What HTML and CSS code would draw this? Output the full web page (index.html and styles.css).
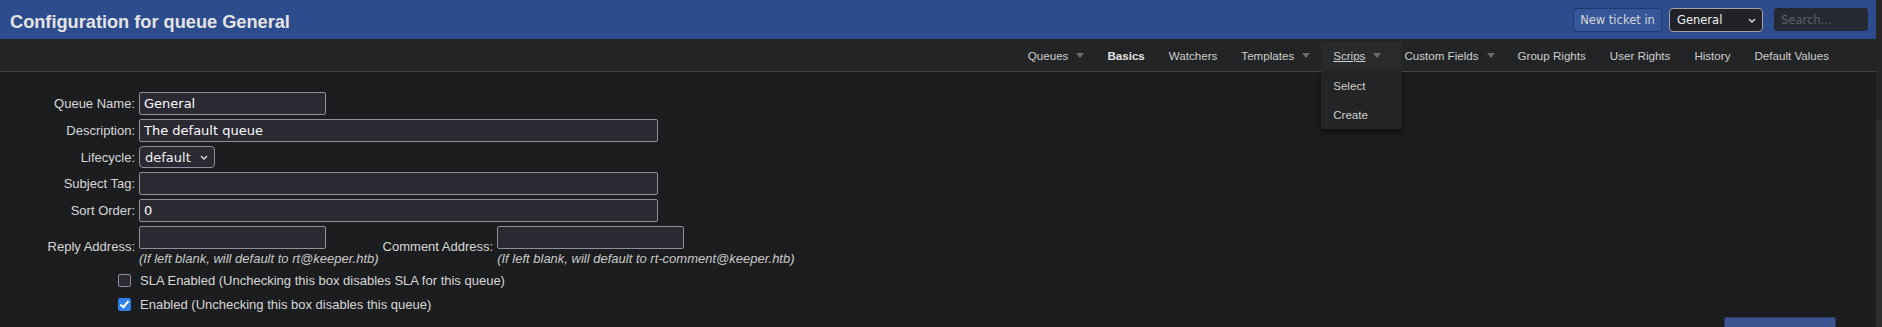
FILE: index.html
```html
<!DOCTYPE html>
<html lang="en">
<head>
<meta charset="UTF-8" />
<title>Configuration for queue General</title>
<link rel="stylesheet" href="styles.css">
</head>
<body>

<div class="page">
  <header class="topbar">
    <h1>Configuration for queue General</h1>
    <form class="quick">
      <button type="button" class="new-ticket">New ticket in</button>
      <span class="select-wrap head-select">
        <select><option>General</option></select>
        <svg class="chev" width="8" height="5" viewBox="0 0 8 5"><path d="M1 1l3 3 3-3" fill="none" stroke="#e0e0e0" stroke-width="1.4"/></svg>
      </span>
      <input class="search" type="text" placeholder="Search...">
    </form>
  </header>

  <nav class="pagemenu">
    <ul>
      <li class="has-sub">Queues<span class="tri"></span></li>
      <li class="current">Basics</li>
      <li>Watchers</li>
      <li class="has-sub">Templates<span class="tri"></span></li>
      <li class="has-sub open">
        <span class="label"><u>Scrips</u><span class="tri"></span></span>
        <ul class="sub">
          <li>Select</li>
          <li>Create</li>
        </ul>
      </li>
      <li class="has-sub">Custom Fields<span class="tri"></span></li>
      <li>Group Rights</li>
      <li>User Rights</li>
      <li>History</li>
      <li>Default Values</li>
    </ul>
  </nav>

  <main class="content">
    <div class="row">
      <label class="lbl">Queue Name:</label>
      <input class="field short" type="text" value="General">
    </div>
    <div class="row">
      <label class="lbl">Description:</label>
      <input class="field long" type="text" value="The default queue">
    </div>
    <div class="row">
      <label class="lbl">Lifecycle:</label>
      <span class="select-wrap life">
        <select><option>default</option></select>
        <svg class="chev" width="8" height="5" viewBox="0 0 8 5"><path d="M1 1l3 3 3-3" fill="none" stroke="#e0e0e0" stroke-width="1.4"/></svg>
      </span>
    </div>
    <div class="row">
      <label class="lbl">Subject Tag:</label>
      <input class="field long" type="text" value="">
    </div>
    <div class="row">
      <label class="lbl">Sort Order:</label>
      <input class="field long" type="text" value="0">
    </div>
    <div class="row addr">
      <label class="lbl">Reply Address:</label>
      <div class="value">
        <input class="field short" type="text" value="">
        <div class="hint">(If left blank, will default to rt@keeper.htb)</div>
      </div>
      <label class="lbl2">Comment Address:</label>
      <div class="value">
        <input class="field short" type="text" value="">
        <div class="hint">(If left blank, will default to rt-comment@keeper.htb)</div>
      </div>
    </div>
    <label class="check-row first"><input type="checkbox"> SLA Enabled (Unchecking this box disables SLA for this queue)</label>
    <label class="check-row"><input type="checkbox" checked> Enabled (Unchecking this box disables this queue)</label>
    <div class="submit">
      <button type="button" class="save" aria-label="Save Changes"></button>
    </div>
  </main>
</div>

<div class="scrollbar"><div class="thumb"></div></div>

</body>
</html>
```

FILE: styles.css
```css
body {
  margin: 0;
  height: 327px;
  overflow: hidden;
  display: flex;
  background: #1c1d1f;
  font-family: "Liberation Sans", Arial, sans-serif;
  color: #d8d8d8;
}
.page {
  flex: 1;
  min-width: 0;
}
.scrollbar {
  width: 6px;
  background: #262626;
  padding-top: 120px;
}
.thumb {
  height: 207px;
  background: #2e2e2e;
}

/* top bar */
.topbar {
  height: 39px;
  background: #2c4c8e;
  display: flex;
  align-items: center;
  justify-content: space-between;
  padding: 0 8px 0 10px;
}
.topbar h1 {
  margin: 0;
  padding-top: 5px;
  font-size: 18.2px;
  font-weight: bold;
  color: #e4e4e4;
}
.quick {
  display: flex;
  align-items: center;
}
.new-ticket {
  height: 24px;
  width: 89px;
  padding: 0;
  font-family: "DejaVu Sans", sans-serif;
  font-size: 11.5px;
  color: #d6d6d6;
  background: #35579a;
  border: 1px solid #1f3a72;
  border-radius: 3px;
}
.select-wrap {
  position: relative;
  display: inline-block;
}
.select-wrap select {
  appearance: none;
  -webkit-appearance: none;
  display: block;
  box-sizing: border-box;
  font-family: "DejaVu Sans", sans-serif;
  color: #f0f0f0;
  margin: 0;
}
.select-wrap .chev {
  position: absolute;
  top: 50%;
  margin-top: -2px;
  pointer-events: none;
}
.head-select {
  margin-left: 7px;
}
.head-select select {
  width: 94px;
  height: 24px;
  padding: 0 0 0 7px;
  font-size: 11.5px;
  background: #202227;
  border: 1px solid #a3a3a8;
  border-radius: 4px;
}
.head-select .chev {
  right: 7px;
}
.search {
  margin-left: 11px;
  width: 94px;
  height: 23px;
  box-sizing: border-box;
  padding: 0 6px;
  font-family: "DejaVu Sans", sans-serif;
  font-size: 11.5px;
  color: #ddd;
  background: #262833;
  border: 1px solid #262833;
  border-radius: 3px;
}
.search::placeholder {
  color: #5e6068;
}

/* page menu */
.pagemenu {
  height: 32px;
  background: #232425;
  border-bottom: 1px solid #434446;
}
.pagemenu > ul {
  list-style: none;
  margin: 0;
  padding: 0 35px 0 0;
  display: flex;
  justify-content: flex-end;
  height: 32px;
}
.pagemenu li {
  padding: 1px 12px 0;
  font-size: 11.6px;
  line-height: 31px;
  color: #cfcfcf;
  white-space: nowrap;
}
.pagemenu li.current {
  font-weight: bold;
  color: #e2e2e2;
}
.pagemenu li.has-sub {
  padding-right: 11px;
}
.tri {
  display: inline-block;
  width: 0;
  height: 0;
  margin-left: 8px;
  border-left: 4.5px solid transparent;
  border-right: 4.5px solid transparent;
  border-top: 5px solid #6b6c6e;
  vertical-align: 2px;
}
.pagemenu li.open {
  position: relative;
}
.pagemenu li.open::before {
  content: "";
  position: absolute;
  left: 0;
  top: 3px;
  width: 81px;
  height: 29px;
  background: #282a2c;
}
.pagemenu li.open .label {
  position: relative;
}
.pagemenu .sub {
  position: absolute;
  top: 32px;
  left: 0;
  width: 81px;
  list-style: none;
  margin: 0;
  padding: 0;
  background: #232425;
  box-shadow: 0 3px 6px rgba(0,0,0,0.55);
  z-index: 5;
}
.pagemenu .sub li {
  line-height: 29px;
  padding: 0 12px;
}

/* form */
.content {
  padding-top: 20px;
  display: flex;
  flex-direction: column;
}
.row {
  display: flex;
  align-items: center;
  margin-bottom: 4px;
}
.lbl {
  width: 135px;
  flex: none;
  text-align: right;
  margin-right: 4px;
  font-size: 13px;
}
.lbl2 {
  font-size: 13px;
  margin: 0 4px;
}
.field {
  box-sizing: border-box;
  height: 23px;
  margin: 0;
  padding: 0 4px;
  font-family: "DejaVu Sans", sans-serif;
  font-size: 13px;
  color: #fbfbfe;
  background: #2b2a33;
  border: 1px solid #8f8f9d;
  border-radius: 2px;
}
.field.short {
  width: 187px;
}
.field.long {
  width: 519px;
}
.life select {
  width: 76px;
  height: 22px;
  padding: 0 0 0 5px;
  font-size: 13px;
  background: #2b2a33;
  border: 1px solid #8f8f9d;
  border-radius: 4px;
}
.life .chev {
  right: 7px;
}
.row.addr {
  align-items: center;
}
.value {
  display: flex;
  flex-direction: column;
}
.hint {
  margin-top: 2px;
  line-height: 16px;
  font-size: 13px;
  font-style: italic;
  color: #c9c9c9;
}
.check-row {
  display: flex;
  align-items: center;
  height: 18px;
  margin-top: 6px;
  padding-left: 118px;
  font-size: 13px;
}
.check-row.first {
  margin-top: 0;
}
.check-row input {
  appearance: none;
  -webkit-appearance: none;
  position: relative;
  width: 13px;
  height: 13px;
  margin: 0 9px 0 0;
  box-sizing: border-box;
  background: #2b2a33;
  border: 1.5px solid #8f8f9d;
  border-radius: 2px;
}
.check-row input:checked {
  background: #2f7fe6;
  border-color: #2f7fe6;
}
.check-row input:checked::after {
  content: "";
  position: absolute;
  left: 3px;
  top: 0px;
  width: 3px;
  height: 7px;
  border-right: 2px solid #fff;
  border-bottom: 2px solid #fff;
  transform: rotate(40deg);
}
.submit {
  display: flex;
  justify-content: flex-end;
  padding-right: 40px;
  margin-top: 4px;
}
.save {
  width: 112px;
  height: 30px;
  background: #3b5592;
  border: 1px solid #2c3a5e;
  border-radius: 2px;
}
```
